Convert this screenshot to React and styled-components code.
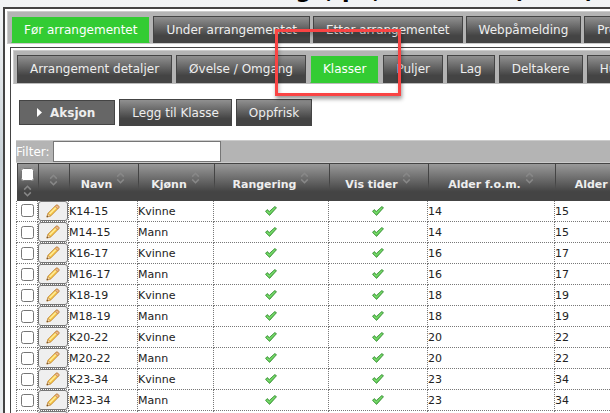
import React from "react";
import styled, { createGlobalStyle } from "styled-components";

const GlobalStyle = createGlobalStyle`
  * { box-sizing: border-box; }
  html, body { height: 100%; }
  body {
    margin: 0;
    overflow: hidden;
    color: #222;
    font: 11px/14px "DejaVu Sans", Verdana, sans-serif;
    background: linear-gradient(#f1f3f5 0, #f0f2f4 20px, #c9d2d8 160px, #e8ebed 100%);
  }
  button, input { font: inherit; margin: 0; }
`;

const Header = styled.header`
  display: flex;
  align-items: flex-end;
  height: 7px;
  padding: 0 0 3px 251px;
  overflow: hidden;
`;

const Title = styled.h1`
  margin: 0;
  color: #000;
  font-size: 22px;
  line-height: 26px;
  white-space: nowrap;
`;

const Page = styled.main`
  min-width: 760px;
  margin-left: 3px;
  padding: 2px;
  border: 2px solid #444;
  background: #fff;
`;

const TabBar = styled.nav`
  display: flex;
  gap: ${(p) => (p.$sub ? 4 : 3)}px;
  padding: 4px 3px 0;
  border: 1px solid #ccc;
  border-bottom-color: ${(p) => (p.$sub ? "#bbb" : "#ccc")};
  background: #b4b4b4;
`;

const Tab = styled.a`
  height: ${(p) => (p.$sub ? 28 : 27)}px;
  padding: 0 12px;
  border: 1px solid ${(p) => (p.$active ? "#b4b4b4" : "#444")};
  border-bottom-color: ${(p) => (p.$active ? "#3c3" : "#444")};
  background: ${(p) => (p.$active ? "#3c3" : "linear-gradient(#909090, #444 75%)")};
  background-clip: padding-box;
  color: ${(p) => (p.$active ? "#fff" : "#eee")};
  font-size: 12px;
  line-height: 26px;
  text-decoration: none;
  white-space: nowrap;
`;

const Panel = styled.section`
  margin: 3px 0 0 3px;
  padding: 2px;
  border: 1px solid #444;
`;

const Toolbar = styled.div`
  display: flex;
  align-items: center;
  gap: 4px;
  padding: 15px 4px 14px 6px;
`;

const Button = styled.button`
  height: 27px;
  padding: 0 12px;
  border: 1px solid #444;
  background: linear-gradient(#909090, #444 75%);
  color: #eee;
  font-size: 12px;
`;

const MenuButton = styled.button`
  display: flex;
  align-items: center;
  gap: 8px;
  height: 25px;
  padding: 0 19px 0 17px;
  border: 1px solid #444;
  background: #666;
  color: #eee;
  font-size: 12px;
  font-weight: bold;
`;

const Grid = styled.div`
  margin-left: 3px;
`;

const FilterBar = styled.div`
  display: flex;
  align-items: center;
  height: 23px;
  border-top: 1px solid #ccc;
  border-bottom: 1px solid #ccc;
  background: #b4b4b4;
`;

const FilterLabel = styled.label`
  width: 37px;
  color: #fff;
  font-size: 12px;
  white-space: nowrap;
`;

const FilterInput = styled.input`
  width: 168px;
  height: 21px;
  padding: 1px 2px;
  border: 1px solid #767676;
  background: #fff;
`;

const Table = styled.table`
  width: 100%;
  table-layout: fixed;
  border-collapse: collapse;
`;

const Col = styled.col`
  width: ${(p) => p.$w}px;
`;

const HeadRow = styled.tr`
  height: 37px;
  background: linear-gradient(#999, #444 75%);
`;

const HeadCell = styled.th`
  padding: 0;
  background: linear-gradient(#444, #444 70%, transparent) left top / 1px 26px no-repeat;
  border-top: 1px solid #444;
  color: #eee;
  font-weight: bold;
  white-space: nowrap;
`;

const HeadContent = styled.div`
  display: flex;
  flex-direction: ${(p) => (p.$stack ? "column" : "row")};
  align-items: ${(p) => (p.$stack ? "center" : "flex-start")};
  justify-content: center;
  gap: 4px;
`;

const HeadLabel = styled.span`
  padding-top: 6px;
`;

const Cell = styled.td`
  height: 21px;
  padding: ${(p) => (p.$text ? 2 : 0)}px 0 0;
  border: 1px dotted #777;
  border-top: 0;
  vertical-align: middle;
  white-space: nowrap;
`;

const Check = styled.input`
  display: block;
  width: 13px;
  height: 13px;
  margin: 0 auto;
`;

const Center = styled.div`
  display: flex;
  justify-content: center;
`;

const EditButton = styled.button`
  display: flex;
  align-items: center;
  justify-content: center;
  width: 100%;
  height: 20px;
  padding: 0;
  border: 1px solid #767676;
  border-radius: 3px;
  background: #efefef;
`;

const Highlight = styled.div`
  position: absolute;
  left: 275px;
  top: 29px;
  width: 126px;
  height: 67px;
  border: 3px solid #f94444;
  box-shadow: 1px 3px 4px rgba(0, 0, 0, 0.4), inset 1px 3px 4px rgba(0, 0, 0, 0.25);
  pointer-events: none;
`;

const SortIcon = () => (
  <svg width="9" height="12" viewBox="0 0 9 12" fill="none" stroke="#888" strokeWidth="1.5" aria-hidden="true">
    <path d="M1.2 4.6 4.5 1.3l3.3 3.3M1.2 7.4l3.3 3.3 3.3-3.3" />
  </svg>
);

const PencilIcon = () => (
  <svg width="14" height="14" viewBox="0 0 14 14" aria-hidden="true">
    <path d="M.8 13.1 2 9.2 9.8 1.4q1.1-.9 2.3.1t.7 2.3L4.8 11.9Z" fill="#f6c747" stroke="#bd8030" strokeWidth=".8" />
    <path d="m3 9.5 7-7 1 1-7 7Z" fill="#ffed9b" />
    <path d="m9 2.4 1-1q1-.8 2.1.1t.7 2.2l-1 1Z" fill="#efb98b" stroke="#b87b43" strokeWidth=".6" />
    <path d="m1 13 1-3.5 2.5 2.4Z" fill="#f3d9b0" stroke="#bd8030" strokeWidth=".5" />
    <path d="m.8 13.1.4-1.5 1.1 1Z" fill="#4d3c2d" />
  </svg>
);

const TickIcon = () => (
  <svg width="12" height="10" viewBox="0 0 12 10" aria-hidden="true">
    <path d="M.5 5.4 2.2 3.6 4.3 5.5 9.8.6l1.7 1.1-6.9 7.7Z" fill="#5dcc50" stroke="#429040" strokeWidth=".9" />
    <path d="m1.8 5.3 2.5 2L9.8 1.8" fill="none" stroke="#92e487" strokeWidth=".8" />
  </svg>
);

const ArrowIcon = () => (
  <svg width="5" height="9" viewBox="0 0 5 9" aria-hidden="true">
    <path d="M0 0 5 4.5 0 9Z" fill="#fff" />
  </svg>
);

const mainTabs = ["Før arrangementet", "Under arrangementet", "Etter arrangementet", "Webpåmelding", "Premiering"];
const subTabs = ["Arrangement detaljer", "Øvelse / Omgang", "Klasser", "Puljer", "Lag", "Deltakere", "Hurtigstart"];
const columns = ["Navn", "Kjønn", "Rangering", "Vis tider", "Alder f.o.m.", "Alder t.o.m."];
const widths = [21, 31, 69, 76, 115, 99, 127, 127];
const groups = [[14, 15], [16, 17], [18, 19], [20, 22], [23, 34]];
const rows = [...groups, [35, 39]].flatMap(([from, to]) => [
  { name: `K${from}-${to}`, gender: "Kvinne", from, to },
  { name: `M${from}-${to}`, gender: "Mann", from, to },
]).slice(0, 11);

const Tabs = ({ items, active, sub, label }) => (
  <TabBar $sub={sub} aria-label={label}>
    {items.map((item) => (
      <Tab key={item} href="#" $sub={sub} $active={item === active} aria-current={item === active ? "page" : undefined}>
        {item}
      </Tab>
    ))}
  </TabBar>
);

export default function App() {
  return (
    <>
      <GlobalStyle />
      <Header>
        <Title>Norge, på, Stevnene (2020)</Title>
      </Header>
      <Page>
        <Tabs items={mainTabs} active="Før arrangementet" label="Arrangement" />
        <Panel>
          <Tabs items={subTabs} active="Klasser" label="Detaljer" sub />
          <Toolbar>
            <MenuButton type="button"><ArrowIcon />Aksjon</MenuButton>
            <Button type="button">Legg til Klasse</Button>
            <Button type="button">Oppfrisk</Button>
          </Toolbar>
          <Grid>
            <FilterBar>
              <FilterLabel htmlFor="filter">Filter:</FilterLabel>
              <FilterInput id="filter" type="text" />
            </FilterBar>
            <Table>
              <colgroup>
                {widths.map((w, i) => <Col key={i} $w={w} />)}
                <col />
              </colgroup>
              <thead>
                <HeadRow>
                  <HeadCell>
                    <HeadContent $stack>
                      <Check type="checkbox" aria-label="Velg alle" />
                      <SortIcon />
                    </HeadContent>
                  </HeadCell>
                  <HeadCell><SortIcon /></HeadCell>
                  {columns.map((c) => (
                    <HeadCell key={c}>
                      <HeadContent><HeadLabel>{c}</HeadLabel><SortIcon /></HeadContent>
                    </HeadCell>
                  ))}
                  <HeadCell />
                </HeadRow>
              </thead>
              <tbody>
                {rows.map((r) => (
                  <tr key={r.name}>
                    <Cell><Check type="checkbox" aria-label={`Velg ${r.name}`} /></Cell>
                    <Cell><EditButton type="button" aria-label={`Rediger ${r.name}`}><PencilIcon /></EditButton></Cell>
                    <Cell $text>{r.name}</Cell>
                    <Cell $text>{r.gender}</Cell>
                    <Cell><Center><TickIcon /></Center></Cell>
                    <Cell><Center><TickIcon /></Center></Cell>
                    <Cell $text>{r.from}</Cell>
                    <Cell $text>{r.to}</Cell>
                    <Cell />
                  </tr>
                ))}
              </tbody>
            </Table>
          </Grid>
        </Panel>
      </Page>
      <Highlight />
    </>
  );
}
